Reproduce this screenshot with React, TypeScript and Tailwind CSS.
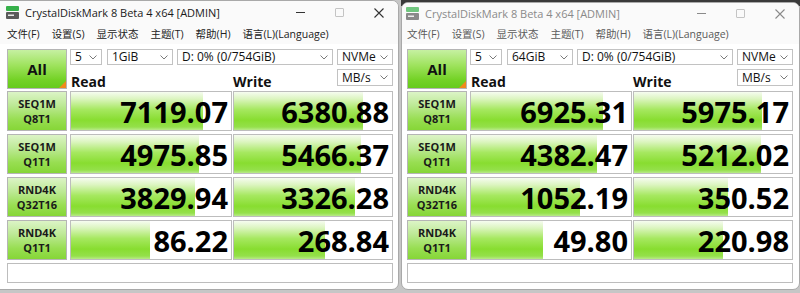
import React from 'react'

type Row = { a: string; b: string; read: string; write: string }

const leftRows: Row[] = [
  { a: 'SEQ1M', b: 'Q8T1', read: '7119.07', write: '6380.88' },
  { a: 'SEQ1M', b: 'Q1T1', read: '4975.85', write: '5466.37' },
  { a: 'RND4K', b: 'Q32T16', read: '3829.94', write: '3326.28' },
  { a: 'RND4K', b: 'Q1T1', read: '86.22', write: '268.84' },
]

const rightRows: Row[] = [
  { a: 'SEQ1M', b: 'Q8T1', read: '6925.31', write: '5975.17' },
  { a: 'SEQ1M', b: 'Q1T1', read: '4382.47', write: '5212.02' },
  { a: 'RND4K', b: 'Q32T16', read: '1052.19', write: '350.52' },
  { a: 'RND4K', b: 'Q1T1', read: '49.80', write: '220.98' },
]

const menu = ['文件(F)', '设置(S)', '显示状态', '主题(T)', '帮助(H)', '语言(L)(Language)']

// log scale like CrystalDiskMark's meter
function barWidth(value: number, width: number) {
  return Math.round(width * (0.153 + 0.1716 * Math.log10(value)))
}

function AppIcon({ faded }: { faded?: boolean }) {
  return (
    <svg width="13" height="13" viewBox="0 0 13 13" className={faded ? 'opacity-70' : ''}>
      <rect x="0" y="0" width="13" height="5" rx="1" fill="#36b04a" />
      <rect x="0" y="6" width="13" height="7" rx="1" fill="#5a5a5a" />
      <rect x="2" y="8.5" width="6" height="1.5" fill="#e8e8e8" />
    </svg>
  )
}

function Chevron() {
  return (
    <svg width="8" height="5" viewBox="0 0 8 5" className="shrink-0">
      <path d="M0.5 0.5 L4 4 L7.5 0.5" fill="none" stroke="#7a7a7a" strokeWidth="1" />
    </svg>
  )
}

function Select({ text, w }: { text: string; w: string }) {
  return (
    <div className={`flex h-full items-center justify-between border border-[#c2c2c2] bg-white pl-[4px] pr-[4px] text-[12px] leading-none text-[#111] ${w}`}>
      <span className="whitespace-nowrap">{text}</span>
      <Chevron />
    </div>
  )
}

function Value({ text, w, cell }: { text: string; w: string; cell: number }) {
  const v = parseFloat(text)
  return (
    <div className={`relative h-full border border-[#bdbdbd] bg-white ${w}`}>
      <div
        className="absolute left-0 top-0 h-full bg-[linear-gradient(to_bottom,#f6fcf0_0%,#dcf5c0_18%,#a6e860_46%,#88dd30_74%,#94e04a_92%,#b8ea88_100%)]"
        style={{ width: barWidth(v, cell) }}
      />
      <div className="relative flex h-full items-center justify-end pr-[3px] text-[29px] font-bold leading-none text-black">
        {text}
      </div>
    </div>
  )
}

function Window({
  rows,
  size,
  inactive,
  className,
  titleH,
  pl,
}: {
  rows: Row[]
  size: string
  inactive?: boolean
  className: string
  titleH: string
  pl: string
}) {
  const titleColor = inactive ? 'text-[#8a8a8a]' : 'text-[#1b1b1b]'
  const menuColor = inactive ? 'text-[#5a5a5a]' : 'text-[#222]'
  return (
    <div className={`flex flex-col overflow-hidden border border-[#a9a9a9] bg-white ${className}`}>
      <div className={`flex shrink-0 items-center bg-[#fafafa] ${titleH} ${pl}`}>
        <div className="-ml-[1px] flex items-center">
          <AppIcon faded={inactive} />
        </div>
        <span className={`ml-[6px] text-[11px] leading-none ${titleColor}`}>CrystalDiskMark 8 Beta 4 x64 [ADMIN]</span>
        <div className="ml-auto flex h-full">
          <div className="flex w-[39px] items-center justify-center">
            <div className={`h-px w-[9px] ${inactive ? 'bg-[#8a8a8a]' : 'bg-[#333]'}`} />
          </div>
          <div className="flex w-[39px] items-center justify-center">
            <div className="h-[9px] w-[9px] rounded-[1px] border border-[#c4c4c4]" />
          </div>
          <div className="flex w-[39px] items-center justify-center">
            <svg width="10" height="10" viewBox="0 0 10 10">
              <path d="M0.5 0.5 L9.5 9.5 M9.5 0.5 L0.5 9.5" stroke={inactive ? '#8a8a8a' : '#333'} strokeWidth="1.1" />
            </svg>
          </div>
        </div>
      </div>
      <div className={`flex h-[20px] shrink-0 items-center gap-[13px] bg-[#fafafa] text-[10.5px] leading-none ${menuColor} ${pl}`}>
        {menu.map((m) => (
          <span key={m} className="-ml-[1px] first:ml-0">{m}</span>
        ))}
      </div>
      <div className={`flex flex-col pt-[5px] ${pl}`}>
        <div className="flex">
          <div className="relative flex h-[40px] w-[60px] items-center justify-center border border-[#b5b5b5] bg-[linear-gradient(to_bottom,#c6f0a2_0%,#9fe35e_40%,#74d226_78%,#66cb1c_100%)] text-[15px] font-bold text-[#111]">
            All
            <svg className="absolute bottom-0 right-0" width="7" height="7" viewBox="0 0 7 7">
              <path d="M7 0 L7 7 L0 7 Z" fill="#f08a1c" />
            </svg>
          </div>
          <div className="ml-[3px] flex w-[323px] flex-col">
            <div className="flex h-[16px]">
              <Select text="5" w="w-[32px]" />
              <div className="ml-[5px]">
                <Select text={size} w="w-[66px]" />
              </div>
              <div className="ml-[4px]">
                <Select text="D: 0% (0/754GiB)" w="w-[156px]" />
              </div>
              <div className="ml-[4px]">
                <Select text="NVMe" w="w-[56px]" />
              </div>
            </div>
            <div className="mt-[4px] flex h-[17px]">
              <div className="flex w-[163px] items-end pl-[1px] text-[14px] font-bold leading-none text-[#111]">
                <span className="translate-y-[3px]">Read</span>
              </div>
              <div className="flex flex-1 items-end text-[14px] font-bold leading-none text-[#111]">
                <span className="translate-y-[3px]">Write</span>
              </div>
              <Select text="MB/s" w="w-[56px]" />
            </div>
          </div>
        </div>
        {rows.map((r, i) => (
          <div key={i} className={`flex h-[40px] ${i === 0 ? 'mt-[2px]' : 'mt-[3px]'}`}>
            <div className="flex h-full w-[60px] flex-col items-center justify-center border border-[#b5b5b5] bg-[linear-gradient(to_bottom,#dcf4c6_0%,#bde996_35%,#98de52_72%,#86d637_100%)] text-[11px] font-bold leading-[15px] text-[#1a1a1a]">
              <span>{r.a}</span>
              <span>{r.b}</span>
            </div>
            <div className="ml-[3px]">
              <Value text={r.read} w="w-[162px]" cell={162} />
            </div>
            <div className="ml-[1px]">
              <Value text={r.write} w="w-[160px]" cell={160} />
            </div>
          </div>
        ))}
        <div className="mt-[3px] h-[20px] w-[386px] border border-[#bdbdbd] bg-white" />
      </div>
    </div>
  )
}

export default function App() {
  return (
    <div
      className="flex h-[293px] w-[800px] overflow-hidden bg-[#c6c6c6]"
      style={{ fontFamily: '"Open Sans", "Noto Sans CJK SC", sans-serif' }}
    >
      <Window
        rows={leftRows}
        size="1GiB"
        pl="pl-[8px]"
        className="-ml-[2px] h-[290px] w-[401px] rounded-br-[7px] rounded-tr-[7px]"
        titleH="h-[23px]"
      />
      <div className="ml-[2px] flex flex-1 flex-col bg-[linear-gradient(to_bottom,#3a3a3a_0px,#3a3a3a_6px,#c6c6c6_6px)] pt-[2px]">
        <Window
          rows={rightRows}
          size="64GiB"
          inactive
          pl="pl-[5px]"
          className="h-[288px] w-[399px] rounded-b-[7px] rounded-t-[7px]"
          titleH="h-[21px]"
        />
      </div>
    </div>
  )
}
